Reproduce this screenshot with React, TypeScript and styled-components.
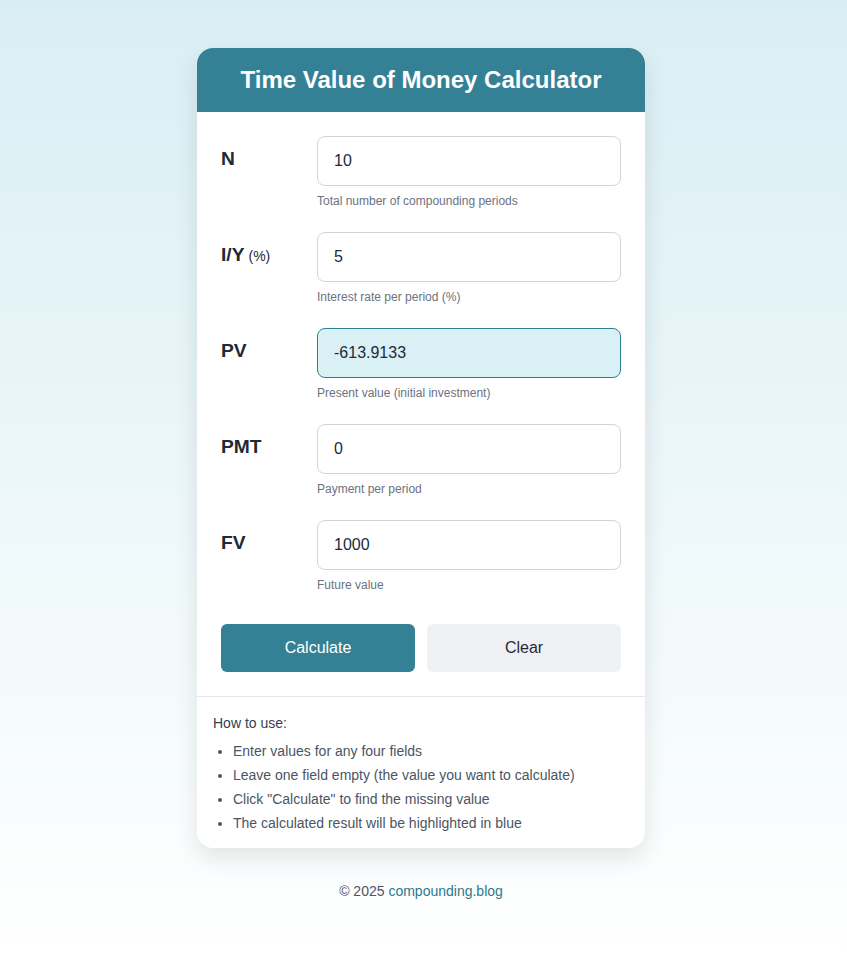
import React from "react";
import styled, { createGlobalStyle } from "styled-components";

const Global = createGlobalStyle`
  html, body { margin: 0; padding: 0; }
  body { font-family: "Liberation Sans", Arial, Helvetica, sans-serif; }
  * { box-sizing: border-box; }
`;

const Page = styled.div`
  min-height: 954px;
  background: linear-gradient(180deg, #d9eef4 0%, #eef8fa 55%, #ffffff 100%);
  display: flex;
  flex-direction: column;
  align-items: center;
  padding: 48px 5px 0 0;
`;

const Card = styled.div`
  width: 448px;
  background: #ffffff;
  border-radius: 16px;
  overflow: hidden;
  box-shadow: 0 10px 25px rgba(0, 0, 0, 0.1);
`;

const Header = styled.div`
  height: 64px;
  background: #348196;
  display: flex;
  align-items: center;
  justify-content: center;
`;

const Title = styled.h1`
  margin: 0;
  color: #ffffff;
  font-size: 24px;
  font-weight: 700;
`;

const Body = styled.div`
  padding: 24px 24px 24px;
  border-bottom: 1px solid #e5e7eb;
`;

const Row = styled.div`
  display: grid;
  grid-template-columns: 96px 1fr;
  margin-bottom: 24px;
`;

const Label = styled.label`
  font-size: 19.2px;
  font-weight: 700;
  line-height: 22px;
  padding-top: 12px;
  color: #1f2937;
`;

const Unit = styled.span`
  font-size: 14px;
  font-weight: 400;
  margin-left: 4px;
`;

const Field = styled.div`
  display: flex;
  flex-direction: column;
`;

const Input = styled.input<{ $highlight?: boolean }>`
  height: 50px;
  width: 100%;
  border: 1px solid ${(p) => (p.$highlight ? "#2f7f93" : "#d1d5db")};
  background: ${(p) => (p.$highlight ? "#d9f0f5" : "#ffffff")};
  border-radius: 8px;
  padding: 0 16px;
  font-family: "Liberation Sans", Arial, sans-serif;
  font-size: 16px;
  color: #1f2937;
  outline: none;
`;

const Help = styled.div`
  margin-top: 8px;
  font-size: 12px;
  line-height: 14px;
  color: #6b7280;
`;

const Buttons = styled.div`
  display: grid;
  grid-template-columns: 1fr 1fr;
  gap: 12px;
  margin-top: 32px;
`;

const Button = styled.button<{ $primary?: boolean }>`
  height: 48px;
  border: none;
  border-radius: 6px;
  font-family: "Liberation Sans", Arial, sans-serif;
  font-size: 16px;
  background: ${(p) => (p.$primary ? "#348196" : "#f0f1f5")};
  color: ${(p) => (p.$primary ? "#ffffff" : "#1f2937")};
  cursor: pointer;
`;

const Instructions = styled.div`
  padding: 17px 16px 13px;
  font-size: 14px;
`;

const HowTo = styled.p`
  margin: 0 0 7px;
  line-height: 18px;
  color: #374151;
`;

const List = styled.ul`
  margin: 0;
  padding-left: 20px;
  color: #4b5563;
`;

const Item = styled.li`
  line-height: 24px;
`;

const Footer = styled.div`
  margin-top: 33px;
  font-size: 14px;
  line-height: 20px;
  color: #4b5563;
`;

const Link = styled.a`
  color: #2c7a8c;
  text-decoration: none;
`;

const fields = [
  { label: "N", value: "10", help: "Total number of compounding periods" },
  { label: "I/Y", unit: "(%)", value: "5", help: "Interest rate per period (%)" },
  { label: "PV", value: "-613.9133", help: "Present value (initial investment)", highlight: true },
  { label: "PMT", value: "0", help: "Payment per period" },
  { label: "FV", value: "1000", help: "Future value" },
];

export default function App() {
  return (
    <>
      <Global />
      <Page>
        <Card>
          <Header>
            <Title>Time Value of Money Calculator</Title>
          </Header>
          <Body>
            {fields.map((f) => (
              <Row key={f.label}>
                <Label>
                  {f.label}
                  {f.unit && <Unit>{f.unit}</Unit>}
                </Label>
                <Field>
                  <Input defaultValue={f.value} $highlight={f.highlight} />
                  <Help>{f.help}</Help>
                </Field>
              </Row>
            ))}
            <Buttons>
              <Button $primary>Calculate</Button>
              <Button>Clear</Button>
            </Buttons>
          </Body>
          <Instructions>
            <HowTo>How to use:</HowTo>
            <List>
              <Item>Enter values for any four fields</Item>
              <Item>Leave one field empty (the value you want to calculate)</Item>
              <Item>Click "Calculate" to find the missing value</Item>
              <Item>The calculated result will be highlighted in blue</Item>
            </List>
          </Instructions>
        </Card>
        <Footer>
          © 2025 <Link href="#">compounding.blog</Link>
        </Footer>
      </Page>
    </>
  );
}
